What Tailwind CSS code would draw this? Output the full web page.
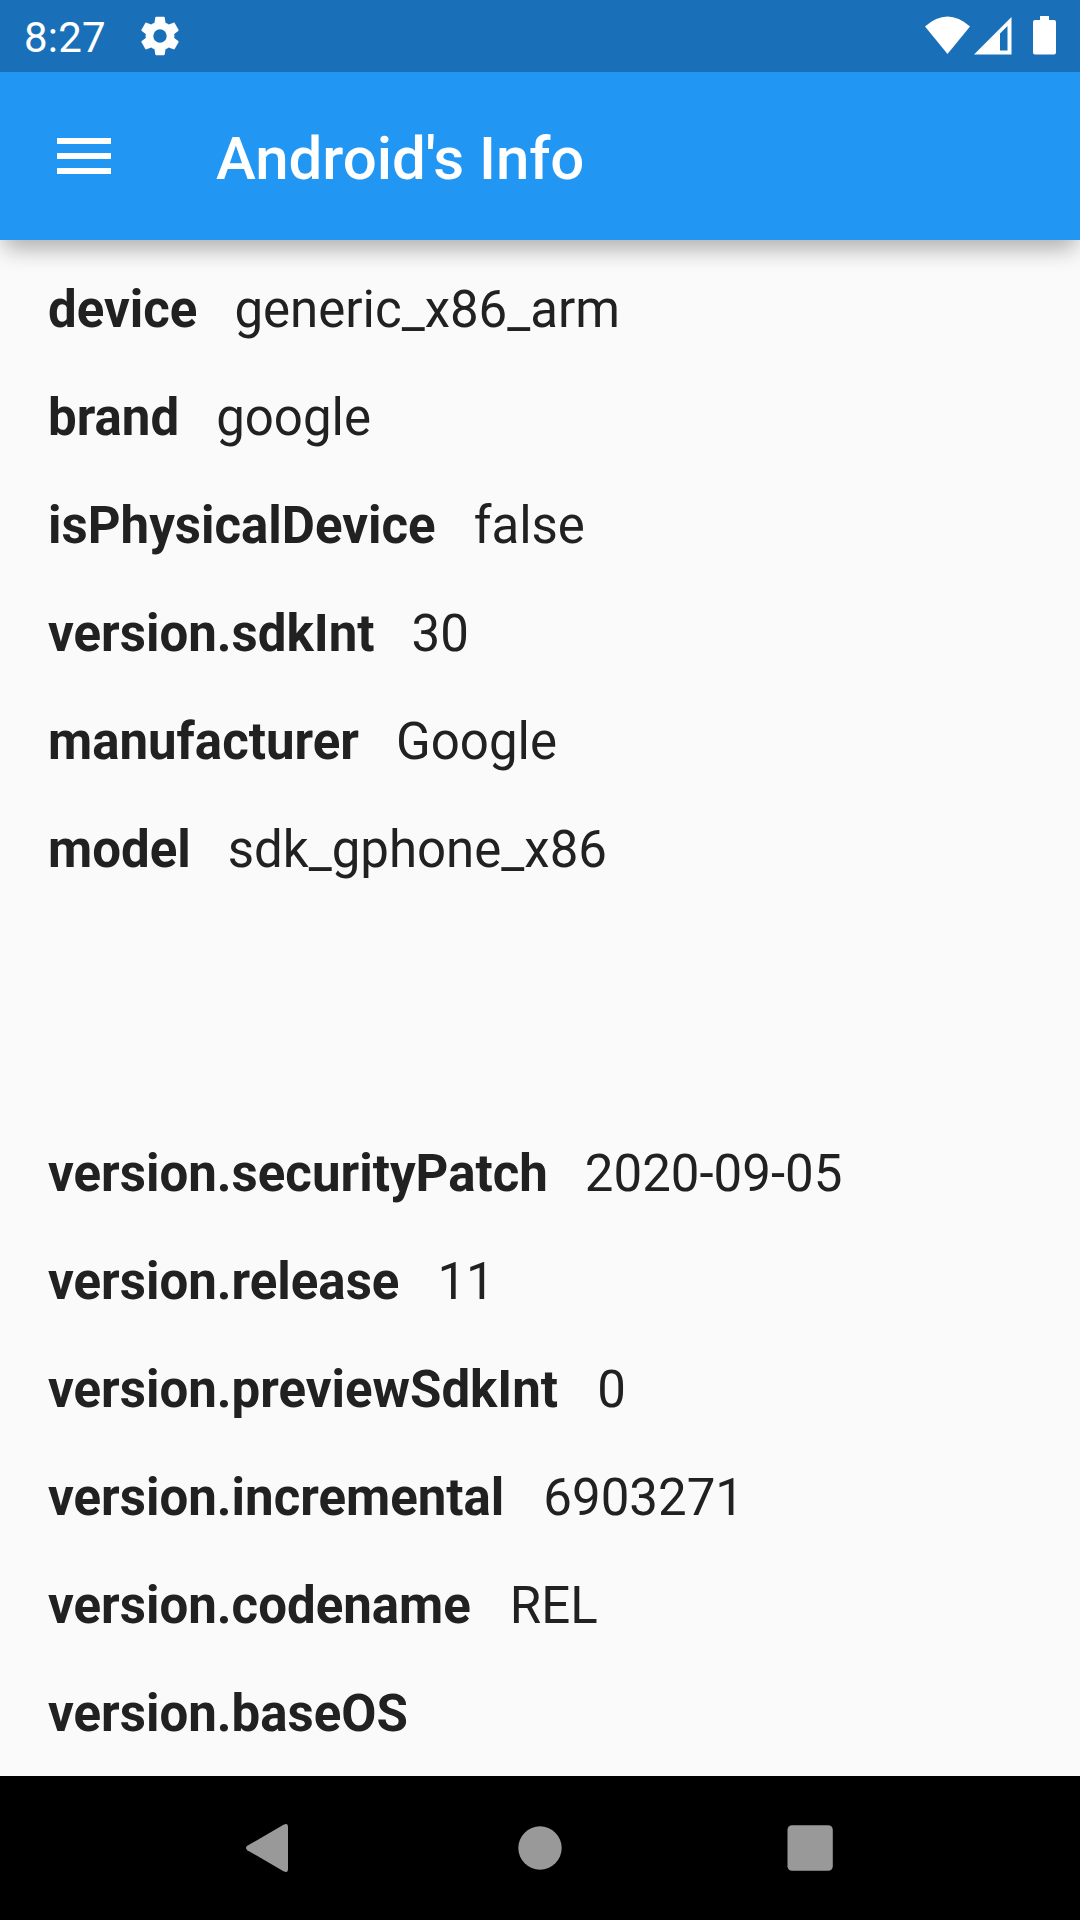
<!DOCTYPE html>
<html lang="en"><head><meta charset="utf-8"><title>Android's Info</title>
<script src="https://cdn.jsdelivr.net/npm/@tailwindcss/browser@4"></script></head>
<body class="w-[1080px] h-[1920px] overflow-hidden flex flex-col bg-[#fafafa] text-[#212121] font-['Roboto',sans-serif]">
<header class="relative z-10 shrink-0">
<div class="relative z-10 h-[72px] bg-[#1a70b8] text-white flex items-center justify-between pl-6 pr-[22px]">
<div class="flex items-center gap-[31px]"><span class="text-[42px] leading-[72px] pt-[3px] tracking-[0.2px]">8:27</span>
<svg class="w-[46px] h-[46px]" viewBox="0 0 24 24" fill="currentColor"><path d="M19.43 12.98c.04-.32.07-.64.07-.98s-.03-.66-.07-.98l2.11-1.65c.19-.15.24-.42.12-.64l-2-3.46c-.12-.22-.39-.3-.61-.22l-2.49 1c-.52-.4-1.08-.73-1.69-.98l-.38-2.65C14.46 2.18 14.25 2 14 2h-4c-.25 0-.46.18-.49.42l-.38 2.65c-.61.25-1.17.59-1.69.98l-2.49-1c-.23-.09-.49 0-.61.22l-2 3.46c-.13.22-.07.49.12.64l2.11 1.65c-.04.32-.07.65-.07.98s.03.66.07.98l-2.11 1.65c-.19.15-.24.42-.12.64l2 3.46c.12.22.39.3.61.22l2.49-1c.52.4 1.08.73 1.69.98l.38 2.65c.03.24.24.42.49.42h4c.25 0 .46-.18.49-.42l.38-2.65c.61-.25 1.17-.59 1.69-.98l2.49 1c.23.09.49 0 .61-.22l2-3.46c.12-.22.07-.49-.12-.64zM12 15.500a3.500 3.500 0 1 1 0-7 3.500 3.500 0 0 1 0 7z"/></svg></div>
<svg class="w-[134px] h-[44px]" viewBox="924 14 134 44" fill="#fff"><path d="M925 26.500Q947.500 6.500 970 26.500L947.500 54Z"/><path fill-rule="evenodd" d="M1011.500 17V54.500H974ZM1000 33.500V50.500H1007.500V26Z"/><path d="M1040 16h9v4h5a2 2 0 0 1 2 2v30.500a2 2 0 0 1-2 2h-19a2 2 0 0 1-2-2V22a2 2 0 0 1 2-2h5z"/></svg>
</div>
<div class="h-[168px] bg-[#2196f3] text-white flex items-center pl-[57px] gap-[105px] shadow-[0_12px_22px_-4px_rgba(0,0,0,0.32)]">
<div class="flex flex-col gap-[9px]"><i class="block w-[54px] h-[6px] bg-white"></i><i class="block w-[54px] h-[6px] bg-white"></i><i class="block w-[54px] h-[6px] bg-white"></i></div>
<h1 class="text-[60px] font-medium leading-[70px] pt-[5px] tracking-[-0.05px]">Android's Info</h1>
</div></header>
<main class="flex-1 min-h-0 overflow-hidden pl-12 pt-4 text-[51px]">
<dl>
<div class="h-[108px] flex items-center gap-[37px]"><dt class="font-bold">device</dt><dd>generic_x86_arm</dd></div>
<div class="h-[108px] flex items-center gap-[37px]"><dt class="font-bold">brand</dt><dd>google</dd></div>
<div class="h-[108px] flex items-center gap-[38px]"><dt class="font-bold">isPhysicalDevice</dt><dd>false</dd></div>
<div class="h-[108px] flex items-center gap-[37px]"><dt class="font-bold">version.sdkInt</dt><dd>30</dd></div>
<div class="h-[108px] flex items-center gap-[37px]"><dt class="font-bold">manufacturer</dt><dd>Google</dd></div>
<div class="h-[108px] flex items-center gap-[37px]"><dt class="font-bold">model</dt><dd>sdk_gphone_x86</dd></div>
</dl>
<dl class="mt-[216px]">
<div class="h-[108px] flex items-center gap-[37px]"><dt class="font-bold">version.securityPatch</dt><dd>2020-09-05</dd></div>
<div class="h-[108px] flex items-center gap-[38px]"><dt class="font-bold">version.release</dt><dd>11</dd></div>
<div class="h-[108px] flex items-center gap-[39px]"><dt class="font-bold">version.previewSdkInt</dt><dd>0</dd></div>
<div class="h-[108px] flex items-center gap-[39px]"><dt class="font-bold">version.incremental</dt><dd>6903271</dd></div>
<div class="h-[108px] flex items-center gap-[39px]"><dt class="font-bold">version.codename</dt><dd>REL</dd></div>
<div class="h-[108px] flex items-center gap-[37px]"><dt class="font-bold">version.baseOS</dt></div>
</dl>
</main>
<nav class="shrink-0 h-36 bg-black flex items-center justify-center gap-[222px]">
<svg class="w-12 h-12" viewBox="0 0 48 48" fill="#999"><path d="M1.300 21.800L37.500 .8Q42 -1.500 42 3V45Q42 49.500 37.500 47.200L1.300 26.200Q-1.300 24 1.300 21.800Z"/></svg>
<svg class="w-12 h-12" viewBox="0 0 48 48" fill="#999"><circle cx="24" cy="24" r="21.700"/></svg>
<svg class="w-12 h-12" viewBox="0 0 48 48" fill="#999"><rect x="1.500" y="1.200" width="45.300" height="45.600" rx="4.500"/></svg>
</nav>
</body></html>
